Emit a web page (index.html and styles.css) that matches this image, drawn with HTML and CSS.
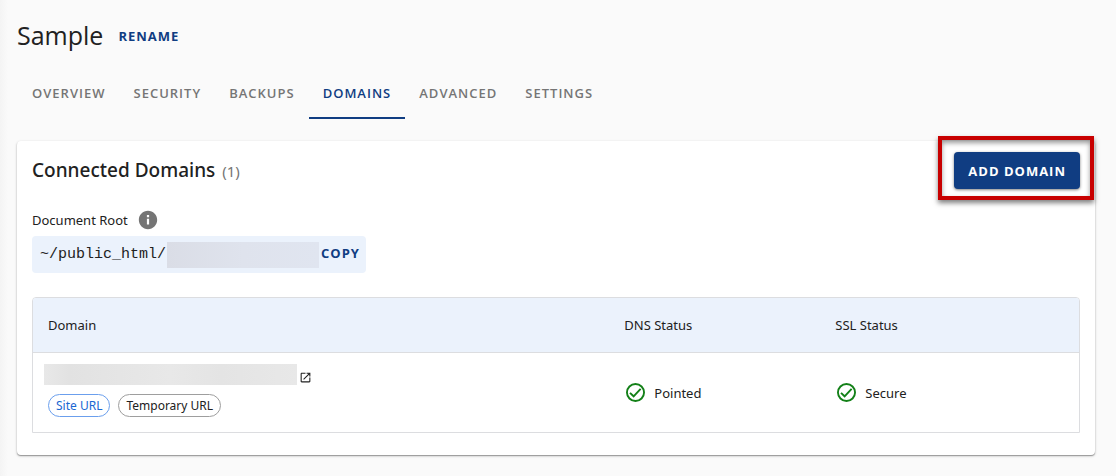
FILE: index.html
```html
<!DOCTYPE html>
<html lang="en">
<head>
<meta charset="utf-8">
<title>Sample - Domains</title>
<link rel="stylesheet" href="styles.css">
</head>
<body>
<main class="page">
  <header class="page-header">
    <h1 class="title">Sample</h1>
    <button class="text-button" type="button">RENAME</button>
  </header>
  <nav class="tabs">
    <a class="tab" href="#overview">OVERVIEW</a>
    <a class="tab" href="#security">SECURITY</a>
    <a class="tab" href="#backups">BACKUPS</a>
    <a class="tab tab-active" href="#domains" aria-current="page">DOMAINS</a>
    <a class="tab" href="#advanced">ADVANCED</a>
    <a class="tab" href="#settings">SETTINGS</a>
  </nav>
  <section class="card">
    <div class="card-header">
      <h2 class="card-title">Connected Domains <span class="count">(1)</span></h2>
      <div class="callout">
        <button class="primary-button" type="button">ADD DOMAIN</button>
      </div>
    </div>
    <div class="root-label">
      <span>Document Root</span>
      <svg class="info-icon" viewBox="0 0 24 24" aria-hidden="true"><path d="M12 2C6.480 2 2 6.480 2 12s4.480 10 10 10 10-4.480 10-10S17.520 2 12 2zm1.200 15h-2.400v-6.500h2.400v6.500zm0-8h-2.400V6.600h2.400v2.400z"/></svg>
    </div>
    <div class="root-path">
      <code class="path">~/public_html/</code>
      <span class="redacted redacted-path"></span>
      <button class="text-button" type="button">COPY</button>
    </div>
    <div class="table-frame">
      <table class="domains">
        <thead>
          <tr><th class="col-domain">Domain</th><th class="col-dns">DNS Status</th><th>SSL Status</th></tr>
        </thead>
        <tbody>
          <tr>
            <td class="domain-cell">
              <div class="domain-name">
                <span class="redacted redacted-domain"></span>
                <a class="open-link" href="#open" aria-label="Open site"><svg class="open-icon" viewBox="0 0 24 24" aria-hidden="true"><path d="M19 19H5V5h7V3H5c-1.110 0-2 .9-2 2v14c0 1.100.890 2 2 2h14c1.100 0 2-.9 2-2v-7h-2v7zM14 3v2h3.590l-9.830 9.830 1.410 1.410L19 6.410V10h2V3h-7z"/></svg></a>
              </div>
              <div class="chips">
                <span class="chip chip-blue">Site URL</span>
                <span class="chip">Temporary URL</span>
              </div>
            </td>
            <td><span class="status"><svg class="check-icon" viewBox="0 0 20 20" aria-hidden="true"><circle cx="10" cy="10" r="9"/><path d="M4.200 10.400l3.800 3.600 7.400-7.800"/></svg>Pointed</span></td>
            <td><span class="status"><svg class="check-icon" viewBox="0 0 20 20" aria-hidden="true"><circle cx="10" cy="10" r="9"/><path d="M4.200 10.400l3.800 3.600 7.400-7.800"/></svg>Secure</span></td>
          </tr>
        </tbody>
      </table>
    </div>
  </section>
</main>
</body>
</html>
```
FILE: styles.css
```css
* { box-sizing: border-box; }
body {
  margin: 0;
  background: linear-gradient(to right, #f4f4f4, #fafafa 8px);
  color: #212121;
  font: 13px/20px "Noto Sans", "Open Sans", sans-serif;
}
button { border: 0; padding: 0; background: none; font: inherit; cursor: pointer; }
.page { padding: 16px 21px 20px 17px; }
.page-header { display: flex; align-items: center; gap: 15px; height: 38px; }
.title { margin: 0; font-family: "Open Sans", sans-serif; font-size: 25px; line-height: 36px; font-weight: 400; }
.text-button { color: #103d82; font-family: "Open Sans", sans-serif; font-weight: 700; letter-spacing: 1px; }
.page-header .text-button { margin-top: 2px; }
.tabs { display: flex; margin: 16px 0 22px; padding-left: 1px; }
.tab {
  padding: 13px 14px 14px;
  border-bottom: 2px solid transparent;
  color: #757575;
  font-family: "Open Sans", sans-serif;
  font-weight: 600;
  letter-spacing: 1px;
  text-decoration: none;
}
.tab-active { color: #103d82; border-bottom-color: #103d82; }
.card {
  padding: 11px 15px 22px;
  border-radius: 4px;
  background: #fff;
  box-shadow: 0 1px 1px #999, 0 1px 3px rgba(0, 0, 0, 0.2);
}
.card-header { display: flex; justify-content: space-between; align-items: center; }
.card-title { margin: 0; font-size: 19px; line-height: 26px; font-weight: 500; }
.count { margin-left: 2px; color: #757575; font-size: 15px; font-weight: 400; }
.callout { position: relative; }
.callout::after {
  content: "";
  position: absolute;
  inset: -16px -14px -11px -16px;
  border: 4px solid #c80000;
  box-shadow: 0 3px 5px rgba(0, 0, 0, 0.5), inset 0 3px 5px rgba(0, 0, 0, 0.4);
  pointer-events: none;
}
.primary-button {
  padding: 9px 14px 8px;
  border-radius: 4px;
  background: #103d82;
  box-shadow: 0 1px 3px rgba(0, 0, 0, 0.5);
  color: #fff;
  font-family: "Open Sans", sans-serif;
  font-weight: 700;
  letter-spacing: 1px;
}
.root-label { display: flex; align-items: center; gap: 9px; margin: 20px 0 5px; line-height: 22px; }
.info-icon { width: 22px; height: 22px; fill: #757575; }
.root-path {
  display: flex;
  align-items: center;
  width: fit-content;
  height: 37px;
  padding: 0 6px 0 8px;
  border-radius: 4px;
  background: #ebf2fc;
}
.root-path .text-button { padding-bottom: 3px; }
.path { font: 15px/20px "Liberation Mono", monospace; }
.redacted { display: block; }
.redacted-path { width: 152px; height: 26px; margin: 0 2px 0 1px; background: linear-gradient(to right, #dadde6, #dfe3ed 50%, #e0e5f0); }
.table-frame { margin-top: 24px; border: 1px solid #dcdde0; border-radius: 4px 4px 0 0; overflow: hidden; }
.domains { width: 100%; border-collapse: separate; border-spacing: 0; table-layout: fixed; }
.domains th {
  height: 55px;
  padding: 0 16px;
  border-bottom: 1px solid #dcdde0;
  background: #ebf2fc;
  font-weight: 400;
  text-align: left;
}
.domains .col-domain { width: 55%; padding-left: 15px; }
.col-dns { width: 211px; }
.domains td { height: 79px; padding: 0 16px; }
.domains .domain-cell { padding: 11px 11px 14px; vertical-align: top; }
.domain-name { display: flex; align-items: center; gap: 1px; }
.redacted-domain { width: 253px; height: 21px; background: linear-gradient(to right, #e8e8e8, #e2e2e2 10%, #e8e8e8 50%, #e4e4e4 70%, #e8e8e8); }
.open-link { display: flex; padding: 5px 1px 0; color: #212121; }
.open-icon { width: 13px; height: 13px; fill: currentColor; }
.chips { display: flex; gap: 8px; margin: 9px 0 0 4px; }
.chip { padding: 0 7px; border: 1px solid #9e9e9e; border-radius: 12px; font-size: 12px; line-height: 21px; }
.chip-blue { border-color: #6b9fed; color: #1967d2; }
.status { display: flex; align-items: center; gap: 9px; padding-left: 2px; }
.check-icon { width: 19px; height: 19px; fill: none; stroke: #138018; stroke-width: 2; }
```
